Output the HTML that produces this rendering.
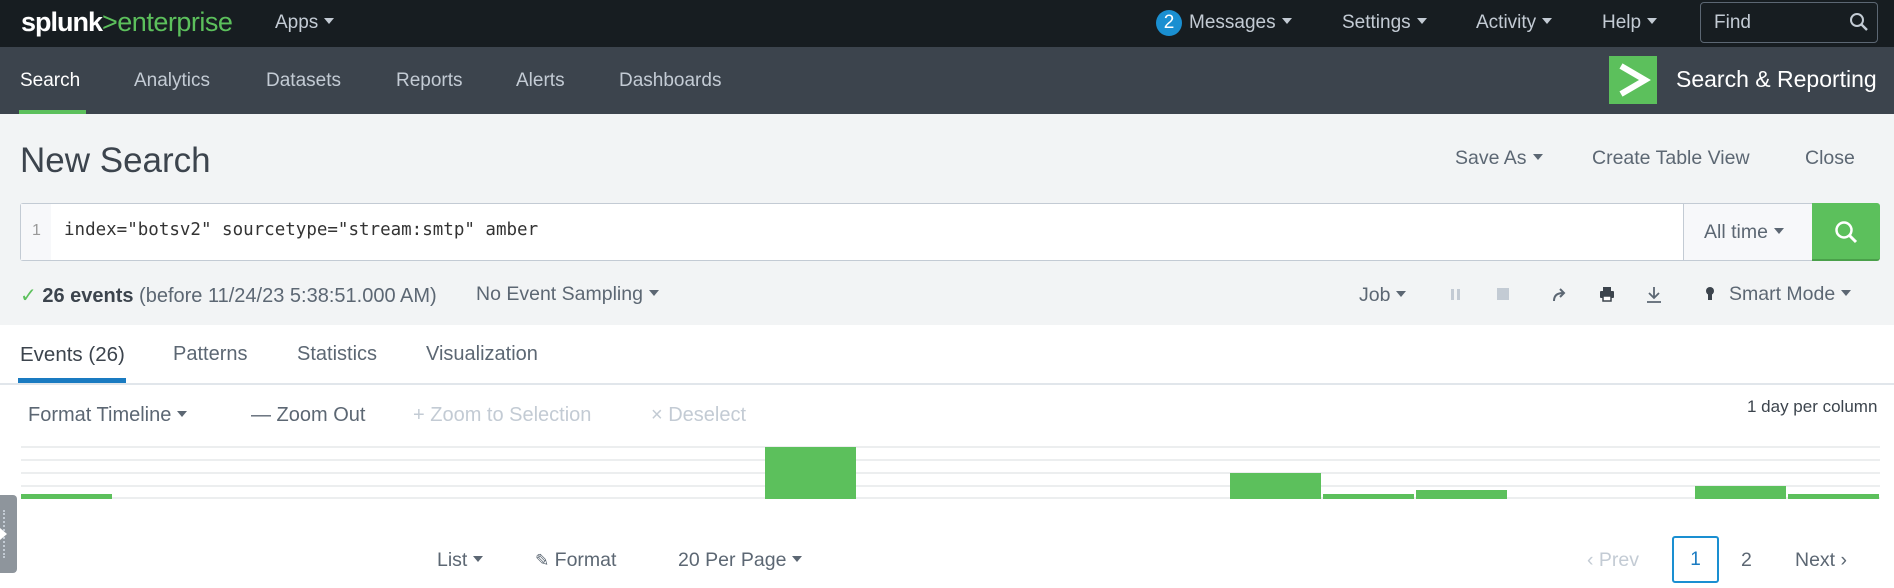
<!DOCTYPE html>
<html><head><meta charset="utf-8"><style>
*{margin:0;padding:0;box-sizing:border-box}
body{width:1894px;height:588px;overflow:hidden;background:#fff;font-family:"Liberation Sans",sans-serif;position:relative}
.a{position:absolute;white-space:nowrap}
.tri{display:inline-block;width:0;height:0;border-left:5px solid transparent;border-right:5px solid transparent;border-top:6px solid currentColor;vertical-align:middle;margin-left:6px;position:relative;top:-2px}
.top{left:0;top:0;width:1894px;height:47px;background:#171d21}
.nav{left:0;top:47px;width:1894px;height:67px;background:#3c444d}
.tw{color:#c3cbd4;font-size:19px}
.gray{left:0;top:114px;width:1894px;height:211px;background:#f2f4f5}
.g1{color:#5c6773;font-size:19.5px}
.gl{left:21px;width:1859px;height:2px;background:#eceeef}
.bar{background:#5cc05c;position:absolute;top:auto;width:91px}
</style></head><body>
<div class="a top"></div>
<div class="a" style="left:21px;top:7px;font-size:27px;color:#fff;font-weight:bold;letter-spacing:-1px">splunk<span style="color:#5cc05c;font-weight:normal;letter-spacing:-0.5px">&gt;enterprise</span></div>
<div class="a tw" style="left:275px;top:12px">Apps<span class="tri"></span></div>
<div class="a" style="left:1156px;top:10px;width:26px;height:26px;border-radius:50%;background:#1a8fd1;color:#fff;font-size:19px;text-align:center;line-height:26px">2</div>
<div class="a tw" style="left:1189px;top:12px">Messages<span class="tri"></span></div>
<div class="a tw" style="left:1342px;top:12px">Settings<span class="tri"></span></div>
<div class="a tw" style="left:1476px;top:12px">Activity<span class="tri"></span></div>
<div class="a tw" style="left:1602px;top:12px">Help<span class="tri"></span></div>
<div class="a" style="left:1700px;top:2px;width:178px;height:41px;border:1px solid #5c6773;border-radius:4px"></div>
<div class="a tw" style="left:1714px;top:12px">Find</div>
<svg class="a" style="left:1849px;top:12px" width="20" height="20" viewBox="0 0 20 20"><circle cx="8" cy="8" r="6" fill="none" stroke="#c3cbd4" stroke-width="2"/><path d="M12.5 12.5L18 18" stroke="#c3cbd4" stroke-width="2.4"/></svg>
<div class="a nav"></div>
<div class="a" style="left:20px;top:70px;font-size:19px;color:#fff">Search</div>
<div class="a" style="left:19px;top:110px;width:67px;height:4px;background:#5cc05c"></div>
<div class="a tw" style="left:134px;top:70px">Analytics</div>
<div class="a tw" style="left:266px;top:70px">Datasets</div>
<div class="a tw" style="left:396px;top:70px">Reports</div>
<div class="a tw" style="left:516px;top:70px">Alerts</div>
<div class="a tw" style="left:619px;top:70px">Dashboards</div>
<div class="a" style="left:1609px;top:56px;width:48px;height:48px;background:#5cc05c"></div>
<svg class="a" style="left:1609px;top:56px" width="48" height="48"><path d="M12 10L36 24L12 38" fill="none" stroke="#fff" stroke-width="6"/></svg>
<div class="a" style="left:1676px;top:66px;font-size:23px;color:#fff">Search &amp; Reporting</div>
<div class="a gray"></div>
<div class="a" style="left:20px;top:141px;font-size:35px;color:#3c444d">New Search</div>
<div class="a g1" style="left:1455px;top:147px">Save As<span class="tri"></span></div>
<div class="a g1" style="left:1592px;top:147px">Create Table View</div>
<div class="a g1" style="left:1805px;top:147px">Close</div>
<div class="a" style="left:20px;top:203px;width:1664px;height:58px;background:#fff;border:1px solid #c3cbd4;border-right:none;border-radius:3px 0 0 3px"></div>
<div class="a" style="left:21px;top:204px;width:30px;height:56px;background:#f7f8fa"></div>
<div class="a" style="left:32px;top:222px;font-size:16px;color:#999">1</div>
<div class="a" style="left:64px;top:220px;font-family:'DejaVu Sans Mono','Liberation Mono',monospace;font-size:17.5px;color:#333">index="botsv2" sourcetype="stream:smtp" amber</div>
<div class="a" style="left:1683px;top:203px;width:130px;height:58px;background:#f7f8fa;border:1px solid #c3cbd4"></div>
<div class="a g1" style="left:1704px;top:221px">All time<span class="tri"></span></div>
<div class="a" style="left:1812px;top:203px;width:68px;height:58px;background:#5cc05c;border-radius:0 3px 3px 0;border-bottom:2px solid #4aa04a"></div>
<svg class="a" style="left:1833px;top:219px" width="26" height="26" viewBox="0 0 26 26"><circle cx="11" cy="11" r="7.5" fill="none" stroke="#fff" stroke-width="2.5"/><path d="M16.5 16.5L23 23" stroke="#fff" stroke-width="3"/></svg>
<div class="a" style="left:20px;top:283px;font-size:20px;color:#5c6773"><span style="color:#5cc05c">✓</span> <b style="color:#3c444d">26 events</b> (before 11/24/23 5:38:51.000 AM)</div>
<div class="a g1" style="left:476px;top:283px;font-size:19.5px">No Event Sampling<span class="tri"></span></div>
<div class="a g1" style="left:1359px;top:284px">Job<span class="tri"></span></div>
<div class="a" style="left:1451px;top:289px;width:3px;height:11px;background:#c3cbd4"></div>
<div class="a" style="left:1457px;top:289px;width:3px;height:11px;background:#c3cbd4"></div>
<div class="a" style="left:1497px;top:288px;width:12px;height:12px;background:#c3cbd4"></div>
<svg class="a" style="left:1551px;top:287px" width="16" height="16"><path d="M3 14C3 8 7 6 12 6" fill="none" stroke="#5c6773" stroke-width="2"/><path d="M9 2L13 6L9 10" fill="none" stroke="#5c6773" stroke-width="2"/></svg>
<svg class="a" style="left:1599px;top:286px" width="16" height="16"><rect x="4" y="1" width="8" height="5" fill="#3c444d"/><rect x="1" y="5" width="14" height="7" rx="1" fill="#3c444d"/><rect x="4" y="10" width="8" height="5" fill="#fff" stroke="#3c444d" stroke-width="1.5"/></svg>
<svg class="a" style="left:1646px;top:286px" width="16" height="18"><path d="M8 1V12M3 7L8 12L13 7M1 16H15" fill="none" stroke="#5c6773" stroke-width="1.8"/></svg>
<svg class="a" style="left:1705px;top:286px" width="10" height="16"><circle cx="5" cy="5" r="4" fill="#3c444d"/><rect x="3" y="8" width="4" height="6" fill="#3c444d"/></svg>
<div class="a g1" style="left:1729px;top:283px">Smart Mode<span class="tri"></span></div>
<div class="a" style="left:0;top:383px;width:1894px;height:2px;background:#e1e6eb"></div>
<div class="a" style="left:20px;top:343px;font-size:20.5px;color:#3c444d">Events (26)</div>
<div class="a" style="left:18px;top:378px;width:108px;height:5px;background:#1a7bc1"></div>
<div class="a g1" style="left:173px;top:343px;font-size:20px">Patterns</div>
<div class="a g1" style="left:297px;top:343px;font-size:20px">Statistics</div>
<div class="a g1" style="left:426px;top:343px;font-size:20px">Visualization</div>
<div class="a g1" style="left:28px;top:404px;font-size:20px">Format Timeline<span class="tri"></span></div>
<div class="a g1" style="left:251px;top:404px;font-size:20px">— Zoom Out</div>
<div class="a" style="left:413px;top:404px;font-size:20px;color:#c3cbd4">+ Zoom to Selection</div>
<div class="a" style="left:651px;top:404px;font-size:20px;color:#c3cbd4">× Deselect</div>
<div class="a" style="left:1747px;top:397px;font-size:17px;color:#3c444d">1 day per column</div>
<div class="a gl" style="top:446px"></div>
<div class="a gl" style="top:459px"></div>
<div class="a gl" style="top:472px"></div>
<div class="a gl" style="top:485px"></div>
<div class="a gl" style="top:497px"></div>
<div class="bar" style="left:21px;top:494px;height:5px"></div>
<div class="bar" style="left:765px;top:447px;height:52px"></div>
<div class="bar" style="left:1230px;top:473px;height:26px"></div>
<div class="bar" style="left:1323px;top:494px;height:5px"></div>
<div class="bar" style="left:1416px;top:490px;height:9px"></div>
<div class="bar" style="left:1695px;top:486px;height:13px"></div>
<div class="bar" style="left:1788px;top:494px;height:5px"></div>
<div class="a" style="left:0;top:495px;width:17px;height:78px;background:#8e959c;border-radius:0 4px 4px 0"></div>
<div class="a" style="left:3px;top:510px;width:2px;height:48px;border-left:2px dotted #c3cbd4"></div>
<div class="a" style="left:0;top:528px;width:0;height:0;border-top:6px solid transparent;border-bottom:6px solid transparent;border-left:7px solid #fff"></div>
<div class="a g1" style="left:437px;top:549px">List<span class="tri"></span></div>
<div class="a g1" style="left:535px;top:549px"><span style="font-size:17px">✎</span> Format</div>
<div class="a g1" style="left:678px;top:549px">20 Per Page<span class="tri"></span></div>
<div class="a" style="left:1587px;top:549px;font-size:19.5px;color:#c3cbd4">‹ Prev</div>
<div class="a" style="left:1672px;top:536px;width:47px;height:47px;border:2px solid #1a8fd1;border-radius:3px;text-align:center;line-height:43px;font-size:19px;color:#1a7bc1">1</div>
<div class="a g1" style="left:1741px;top:549px">2</div>
<div class="a g1" style="left:1795px;top:549px">Next ›</div>
</body></html>
